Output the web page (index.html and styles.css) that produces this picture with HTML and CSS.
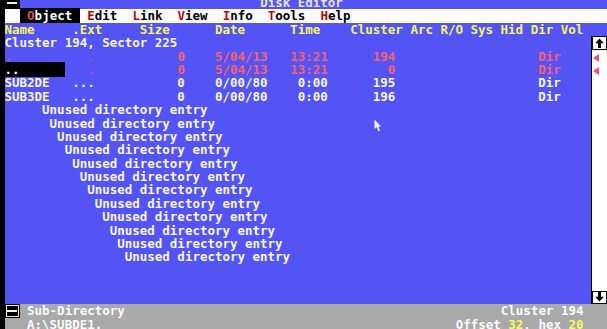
FILE: index.html
```html
<!DOCTYPE html>
<html lang="en">
<head>
    <meta charset="UTF-8">
    <title>Disk Editor</title>
    <link rel="stylesheet" href="styles.css">
</head>
<body>
    <div class="screen">
        <!-- title bar -->
        <div class="line title-row"><span class="sysbox"><i class="dash"></i></span><span class="title">Disk Editor</span></div>

        <!-- menu -->
        <div class="line menu-row">  <span class="menu-sel"> <span class="hot">O</span>bject </span> <span class="hot">E</span>dit  <span class="hot">L</span>ink  <span class="hot">V</span>iew  <span class="hot">I</span>nfo  <span class="hot">T</span>ools  <span class="hot">H</span>elp</div>

        <!-- directory listing -->
        <div class="panel">
            <div class="listing">
                <div class="line head">Name     .Ext     Size      Date      Time    Cluster Arc R/O Sys Hid Dir Vol</div>
                <div class="line">Cluster 194, Sector 225</div>
                <div class="line red"><span class="dim">.</span>          <span class="dim">.</span>           0    5/04/13   13:21      194                   Dir<span class="mark"></span></div>
                <div class="line red"><span class="cursor">..      </span>   <span class="dim">.</span>           0    5/04/13   13:21        0                   Dir<span class="mark"></span></div>
                <div class="line">SUB2DE   ...           0    0/00/80    0:00      195                   Dir</div>
                <div class="line">SUB3DE   ...           0    0/00/80    0:00      196                   Dir</div>
                <div class="line">     Unused directory entry</div>
                <div class="line">      Unused directory entry</div>
                <div class="line">       Unused directory entry</div>
                <div class="line">        Unused directory entry</div>
                <div class="line">         Unused directory entry</div>
                <div class="line">          Unused directory entry</div>
                <div class="line">           Unused directory entry</div>
                <div class="line">            Unused directory entry</div>
                <div class="line">             Unused directory entry</div>
                <div class="line">              Unused directory entry</div>
                <div class="line">               Unused directory entry</div>
                <div class="line">                Unused directory entry</div>
            </div>
            <div class="scrollbar">
                <div class="arrow-box">
                    <svg width="9" height="10" viewBox="0 0 9 10"><path d="M4.5 0.5 L8.8 5.2 L6 5.2 L6 10 L3 10 L3 5.2 L0.2 5.2 Z" fill="#000"/></svg>
                </div>
                <div class="arrow-box">
                    <svg width="9" height="10" viewBox="0 0 9 10"><path d="M4.5 9.5 L8.8 4.8 L6 4.8 L6 0 L3 0 L3 4.8 L0.2 4.8 Z" fill="#000"/></svg>
                </div>
            </div>
        </div>

        <!-- status -->
        <div class="status">
            <div class="status-line">
                <span><span class="sysbox framed"><i class="dash"></i></span> Sub-Directory</span>
                <span>Cluster 194</span>
            </div>
            <div class="status-line">
                <span>   A:\SUBDE1.</span>
                <span>Offset <span class="num">32</span>, hex <span class="num">20</span></span>
            </div>
        </div>
    </div>

    <svg class="pointer" width="8" height="13" viewBox="0 0 8 13">
        <path d="M0.5 0.5 L0.5 10 L2.6 8 L4.4 12.2 L6 11.5 L4.2 7.4 L7 7.4 Z" fill="#f4f4f4"/>
    </svg>
</body>
</html>
```

FILE: styles.css
```css
:root {
    --cw: 7.52px;
    --rh: 13.4px;
    --blue: #5454f4;
}
body {
    margin: 0;
    width: 607px;
    height: 329px;
    overflow: hidden;
    background: #000;
    color: #f6f6f6;
    font-family: "DejaVu Sans Mono", "Liberation Mono", monospace;
    font-weight: bold;
    font-size: 12.49px;
    position: relative;
}
.screen {
    margin: -4px 0 0 4.5px;
}
.line {
    height: var(--rh);
    line-height: var(--rh);
    white-space: pre;
}
.title-row {
    background: var(--blue);
    color: #e4e4ee;
}
.title {
    margin-left: calc(32 * var(--cw));
}
.sysbox {
    display: inline-flex;
    align-items: center;
    justify-content: center;
    width: calc(2 * var(--cw));
    height: var(--rh);
    vertical-align: top;
    background: #000;
    box-sizing: border-box;
}
.sysbox.framed {
    box-shadow: inset 0 0 0 1px #000, inset 0 0 0 2px #e8e8e8;
}
.dash {
    display: block;
    width: 10px;
    height: 2px;
    background: #f0f0f0;
}
.menu-row {
    background: #fbfbfb;
    color: #000;
}
.hot {
    color: #b00c0c;
}
.menu-sel {
    background: #000;
    color: #fff;
}
.menu-sel .hot {
    color: #e84a4a;
}
.panel {
    display: flex;
    height: calc(21 * var(--rh));
    background: var(--blue);
}
.listing {
    flex: none;
    width: calc(78 * var(--cw));
    position: relative;
    z-index: 1;
}
.head {
    color: #f6f65c;
}
.red {
    color: #f9606e;
}
.dim {
    opacity: 0.45;
}
.cursor {
    background: #000;
    color: #fff;
}
/* arrow pointing at the scrollbar, column 77 */
.mark {
    display: inline-block;
    width: 0;
    height: 0;
    margin-left: calc(4 * var(--cw) + 2px);
    border-right: 6px solid #ee5060;
    border-top: 4px solid transparent;
    border-bottom: 4px solid transparent;
    vertical-align: -1px;
}
.scrollbar {
    flex: 1;
    margin-top: var(--rh);
    background: #fff;
    border-left: 1px solid #000;
    display: flex;
    flex-direction: column;
    justify-content: space-between;
}
.arrow-box {
    height: var(--rh);
    border: 1px solid #000;
    box-sizing: border-box;
    display: flex;
    align-items: center;
    justify-content: center;
}
.status {
    background: #a9a9a9;
    color: #fafafa;
}
.status-line {
    display: flex;
    justify-content: space-between;
    padding-right: 23.5px;
    height: var(--rh);
    line-height: var(--rh);
    white-space: pre;
}
.num {
    color: #f8f860;
}
.pointer {
    position: absolute;
    left: 374px;
    top: 119px;
}
```
